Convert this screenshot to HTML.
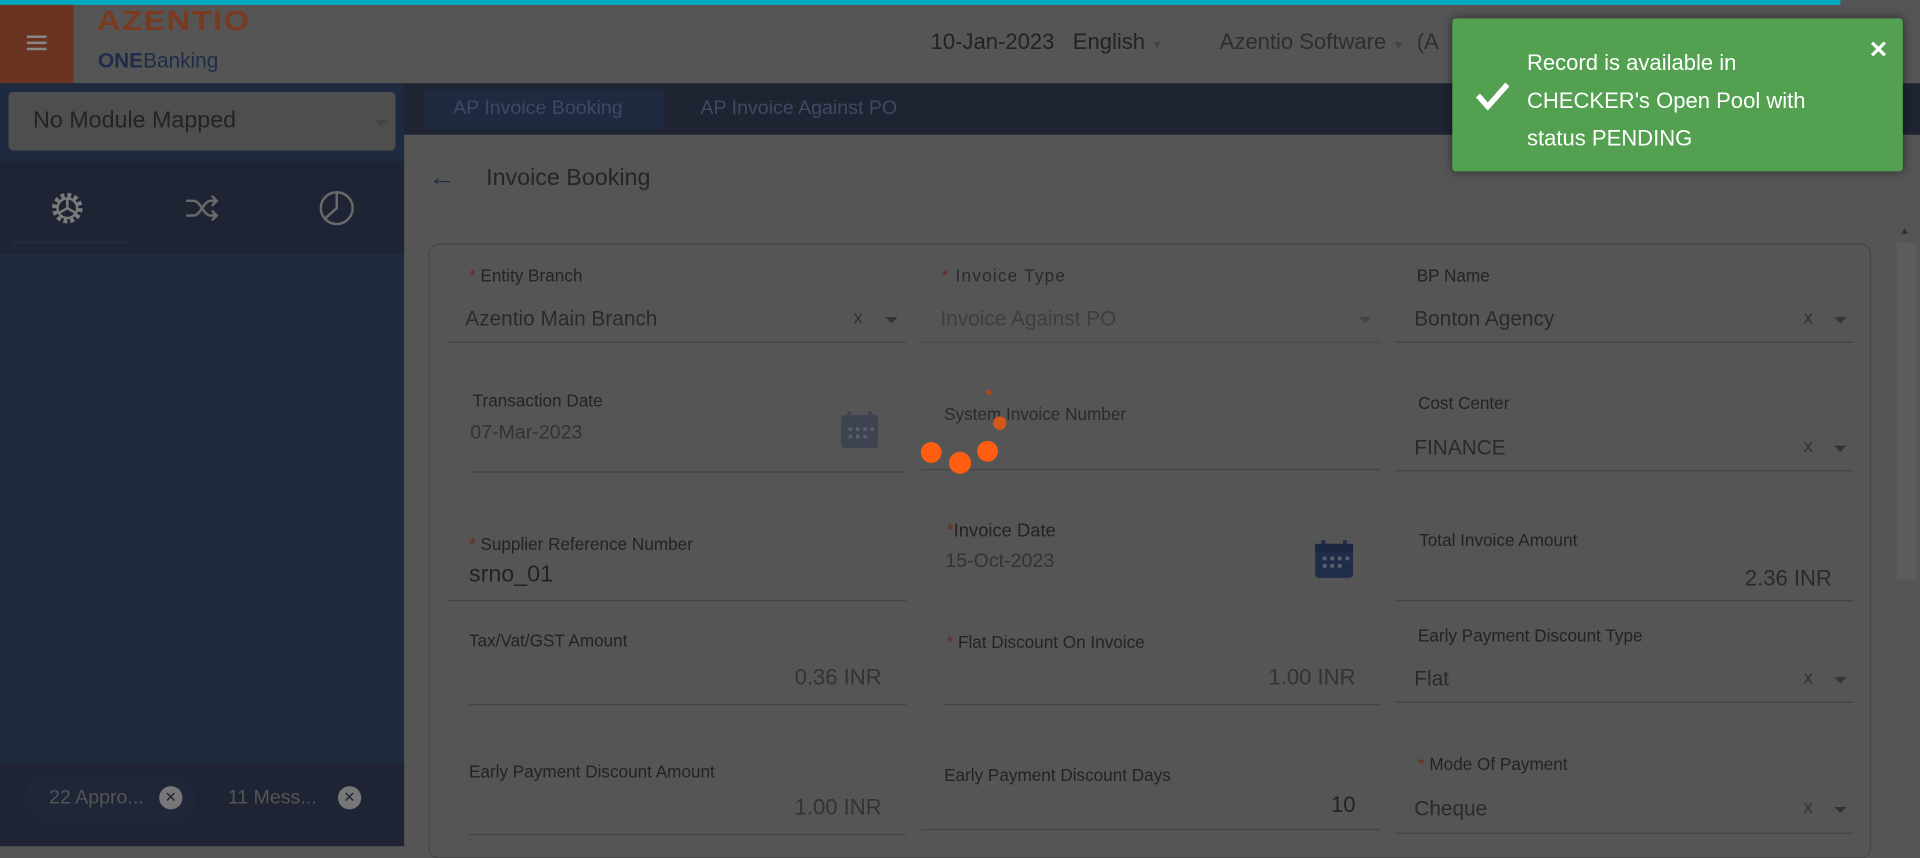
<!DOCTYPE html>
<html><head><meta charset="utf-8"><style>
html,body{margin:0;padding:0;width:1920px;height:846px;overflow:hidden;background:#555;font-family:"Liberation Sans",sans-serif}
#w{position:absolute;left:0;top:0;width:1568px;height:691px;transform:scale(1.22449);transform-origin:0 0;background:#555}
.a{position:absolute}
.lbl{position:absolute;font-size:14px;color:#232323}
.val{position:absolute;font-size:17px;color:#2a2a2a}
.ln{position:absolute;height:1px;background:#444}
.r{color:#6e2a22}
.xd{position:absolute;font-size:15px;color:#333}
.tri{position:absolute;width:0;height:0;border-left:5px solid transparent;border-right:5px solid transparent;border-top:5px solid #333}
</style></head><body><div id="w">
<div class="a" style="left:0;top:0;width:1503px;height:4px;background:#00a9bd"></div>
<div class="a" style="left:0;top:4px;width:60px;height:64px;background:#6a3420"></div>
<div class="a" style="left:22px;top:29px;width:16px;height:2px;background:#888;box-shadow:0 5px #888,0 10px #888"></div>
<div class="a" style="left:79px;top:4px;font-size:27px;font-weight:900;color:#7a3a20;letter-spacing:1px;transform:scaleY(0.85);transform-origin:0 0">AZENTIO</div>
<div class="a" style="left:80px;top:40px;font-size:17px;color:#1f2c4a"><b>ONE</b>Banking</div>
<div class="a" style="left:760px;top:24px;font-size:18px;color:#222">10-Jan-2023 &nbsp;&nbsp;English <span style="font-size:10px;color:#444">▼</span></div>
<div class="a" style="left:996px;top:24px;font-size:18px;color:#2e2e2e">Azentio Software <span style="font-size:10px;color:#444">▼</span> &nbsp;(A</div>
<div class="a" style="left:0;top:68px;width:330px;height:623px;background:#1f2a3e"></div>
<div class="a" style="left:0;top:68px;width:330px;height:64px;background:#1d2a40"></div>
<div class="a" style="left:7px;top:75px;width:316px;height:48px;background:#4e4e4e;border-radius:4px"></div>
<div class="a" style="left:27px;top:88px;font-size:19px;color:#232323">No Module Mapped</div>
<div class="tri" style="left:306px;top:98px;border-top-color:#444"></div>
<div class="a" style="left:0;top:132px;width:330px;height:75px;background:#1e2434"></div>
<div class="a" style="left:10px;top:197px;width:94px;height:2px;background:#232c40"></div>
<svg class="a" style="left:38px;top:153px" width="34" height="34" viewBox="0 0 34 34"><circle cx="17" cy="17" r="10" fill="none" stroke="#7a7a7a" stroke-width="5" stroke-dasharray="3 2.2"/><circle cx="17" cy="17" r="8" fill="none" stroke="#7a7a7a" stroke-width="2"/><path d="M17 17V9M17 17l-7 4M17 17l7 4" stroke="#7a7a7a" stroke-width="2"/></svg>
<svg class="a" style="left:150px;top:158px" width="30" height="24" viewBox="0 0 30 24"><path d="M2 6h6c6 0 8 12 14 12h5M2 18h6c6 0 8-12 14-12h5M23 2l4 4-4 4M23 14l4 4-4 4" fill="none" stroke="#6a6a6a" stroke-width="2"/></svg>
<svg class="a" style="left:259px;top:154px" width="32" height="32" viewBox="0 0 32 32"><circle cx="16" cy="16" r="13" fill="none" stroke="#6a6a6a" stroke-width="2"/><path d="M16 3v13l-9 8" fill="none" stroke="#6a6a6a" stroke-width="2"/></svg>
<div class="a" style="left:0;top:623px;width:330px;height:68px;background:#1e2433"></div>
<div class="a" style="left:20px;top:632px;width:140px;height:40px;border-radius:20px;background:#1f2638"></div>
<div class="a" style="left:40px;top:643px;font-size:16px;color:#555">22 Appro...</div>
<div class="a" style="left:130px;top:642px;width:19px;height:19px;border-radius:50%;background:#777;color:#1e2433;font-size:12px;text-align:center;line-height:19px">✕</div>
<div class="a" style="left:186px;top:643px;font-size:16px;color:#555">11 Mess...</div>
<div class="a" style="left:276px;top:642px;width:19px;height:19px;border-radius:50%;background:#777;color:#1e2433;font-size:12px;text-align:center;line-height:19px">✕</div>
<div class="a" style="left:330px;top:68px;width:1238px;height:42px;background:#1f2433"></div>
<div class="a" style="left:346px;top:73px;width:197px;height:32px;background:#1f2a40;border-radius:3px"></div>
<div class="a" style="left:370px;top:80px;font-size:16px;color:#3e4a62">AP Invoice Booking</div>
<div class="a" style="left:572px;top:80px;font-size:16px;color:#3e4a62">AP Invoice Against PO</div>
<div class="a" style="left:350px;top:132px;font-size:22px;color:#1f2c4a">←</div>
<div class="a" style="left:397px;top:135px;font-size:19px;color:#252525">Invoice Booking</div>
<div class="a" style="left:350px;top:199px;width:1176px;height:500px;border:1px solid #464646;border-radius:8px"></div>
<div class="a" style="left:1549px;top:198px;width:16px;height:275px;background:#5c5c5c"></div>
<div class="a" style="left:1551px;top:183px;font-size:9px;color:#333">▲</div>

<div class="lbl" style="left:383px;top:217px"><span class="r">* </span>Entity Branch</div>
<div class="val" style="left:380px;top:251px">Azentio Main Branch</div>
<div class="xd" style="left:697px;top:251px">x</div><div class="tri" style="left:723px;top:259px"></div>
<div class="ln" style="left:365px;top:279px;width:375px"></div>
<div class="lbl" style="left:769px;top:217px;letter-spacing:1px;color:#2a2a2a"><span class="r">* </span>Invoice Type</div>
<div class="val" style="left:768px;top:251px;color:#3e3e3e">Invoice Against PO</div>
<div class="tri" style="left:1110px;top:259px;border-top-color:#444"></div>
<div class="a" style="left:752px;top:279px;width:375px;border-top:1px dotted #444"></div>
<div class="lbl" style="left:1157px;top:217px">BP Name</div>
<div class="val" style="left:1155px;top:251px">Bonton Agency</div>
<div class="xd" style="left:1473px;top:251px">x</div><div class="tri" style="left:1498px;top:259px"></div>
<div class="ln" style="left:1139px;top:279px;width:375px"></div>

<div class="lbl" style="left:386px;top:319px">Transaction Date</div>
<div class="val" style="left:384px;top:345px;font-size:16px;color:#333">07-Mar-2023</div>
<svg class="a" style="left:686px;top:335px" width="32" height="32" viewBox="0 0 32 32"><rect x="1" y="4" width="30" height="27" rx="3" fill="#3e4352"/><rect x="6" y="1" width="3" height="6" fill="#3e4352"/><rect x="23" y="1" width="3" height="6" fill="#3e4352"/><g fill="#5a5e6a"><rect x="7" y="14" width="3" height="3"/><rect x="13" y="14" width="3" height="3"/><rect x="19" y="14" width="3" height="3"/><rect x="7" y="20" width="3" height="3"/><rect x="13" y="20" width="3" height="3"/><rect x="19" y="20" width="3" height="3"/><rect x="25" y="14" width="3" height="3"/></g></svg>
<div class="ln" style="left:384px;top:385px;width:356px"></div>
<div class="lbl" style="left:771px;top:330px;color:#2a2a2a">System Invoice Number</div>
<div class="ln" style="left:752px;top:383px;width:375px"></div>
<div class="lbl" style="left:1158px;top:321px">Cost Center</div>
<div class="val" style="left:1155px;top:356px">FINANCE</div>
<div class="xd" style="left:1473px;top:356px">x</div><div class="tri" style="left:1498px;top:364px"></div>
<div class="ln" style="left:1139px;top:384px;width:375px"></div>

<div class="a" style="left:805px;top:318px;width:5px;height:5px;border-radius:50%;background:#9a4a28"></div>
<div class="a" style="left:811px;top:340px;width:11px;height:11px;border-radius:50%;background:#d05818"></div>
<div class="a" style="left:798px;top:360px;width:17px;height:17px;border-radius:50%;background:#ff5e10"></div>
<div class="a" style="left:775px;top:369px;width:18px;height:18px;border-radius:50%;background:#ff5e10"></div>
<div class="a" style="left:752px;top:361px;width:17px;height:17px;border-radius:50%;background:#ff5e10"></div>

<div class="lbl" style="left:383px;top:436px"><span class="r">* </span>Supplier Reference Number</div>
<div class="val" style="left:383px;top:459px;font-size:19px;color:#222">srno_01</div>
<div class="ln" style="left:365px;top:490px;width:375px"></div>
<div class="lbl" style="left:773px;top:425px;font-size:15px"><span class="r">*</span>Invoice Date</div>
<div class="val" style="left:772px;top:450px;font-size:16px;color:#333">15-Oct-2023</div>
<svg class="a" style="left:1073px;top:440px" width="33" height="33" viewBox="0 0 32 32"><rect x="1" y="4" width="30" height="27" rx="3" fill="#1f2c4a"/><rect x="6" y="1" width="3" height="6" fill="#1f2c4a"/><rect x="23" y="1" width="3" height="6" fill="#1f2c4a"/><rect x="1" y="4" width="30" height="6" fill="#1a2540"/><g fill="#5a6070"><rect x="7" y="14" width="3" height="3"/><rect x="13" y="14" width="3" height="3"/><rect x="19" y="14" width="3" height="3"/><rect x="25" y="14" width="3" height="3"/><rect x="7" y="20" width="3" height="3"/><rect x="13" y="20" width="3" height="3"/><rect x="19" y="20" width="3" height="3"/></g></svg>
<div class="lbl" style="left:1159px;top:433px">Total Invoice Amount</div>
<div class="val" style="left:1300px;top:462px;width:196px;text-align:right;font-size:18px">2.36 INR</div>
<div class="ln" style="left:1139px;top:490px;width:375px"></div>

<div class="lbl" style="left:383px;top:515px">Tax/Vat/GST Amount</div>
<div class="val" style="left:520px;top:543px;width:200px;text-align:right;font-size:18px;color:#333">0.36 INR</div>
<div class="ln" style="left:383px;top:575px;width:357px"></div>
<div class="lbl" style="left:773px;top:516px"><span class="r">* </span>Flat Discount On Invoice</div>
<div class="val" style="left:907px;top:543px;width:200px;text-align:right;font-size:18px;color:#333">1.00 INR</div>
<div class="ln" style="left:770px;top:575px;width:357px"></div>
<div class="lbl" style="left:1158px;top:511px">Early Payment Discount Type</div>
<div class="val" style="left:1155px;top:545px">Flat</div>
<div class="xd" style="left:1473px;top:545px">x</div><div class="tri" style="left:1498px;top:553px"></div>
<div class="ln" style="left:1139px;top:573px;width:375px"></div>

<div class="lbl" style="left:383px;top:622px">Early Payment Discount Amount</div>
<div class="val" style="left:520px;top:649px;width:200px;text-align:right;font-size:18px;color:#333">1.00 INR</div>
<div class="ln" style="left:383px;top:681px;width:357px"></div>
<div class="lbl" style="left:771px;top:625px">Early Payment Discount Days</div>
<div class="val" style="left:907px;top:647px;width:200px;text-align:right;font-size:18px;color:#222">10</div>
<div class="ln" style="left:752px;top:677px;width:375px"></div>
<div class="lbl" style="left:1158px;top:616px"><span class="r">* </span>Mode Of Payment</div>
<div class="val" style="left:1155px;top:651px">Cheque</div>
<div class="xd" style="left:1473px;top:651px">x</div><div class="tri" style="left:1498px;top:659px"></div>
<div class="ln" style="left:1139px;top:680px;width:375px"></div>

<div class="a" style="left:1186px;top:15px;width:368px;height:125px;background:#52a050;border-radius:3px;box-shadow:0 0 8px rgba(0,0,0,.5)"></div>
<svg class="a" style="left:1204px;top:66px" width="30" height="24" viewBox="0 0 30 24"><path d="M3 12l8 9L27 3" fill="none" stroke="#fff" stroke-width="4.5"/></svg>
<div class="a" style="left:1247px;top:36px;font-size:18px;line-height:31px;color:#fff">Record is available in<br>CHECKER's Open Pool with<br>status PENDING</div>
<div class="a" style="left:1526px;top:30px;font-size:19px;font-weight:bold;color:#fff">✕</div>
</div></body></html>
